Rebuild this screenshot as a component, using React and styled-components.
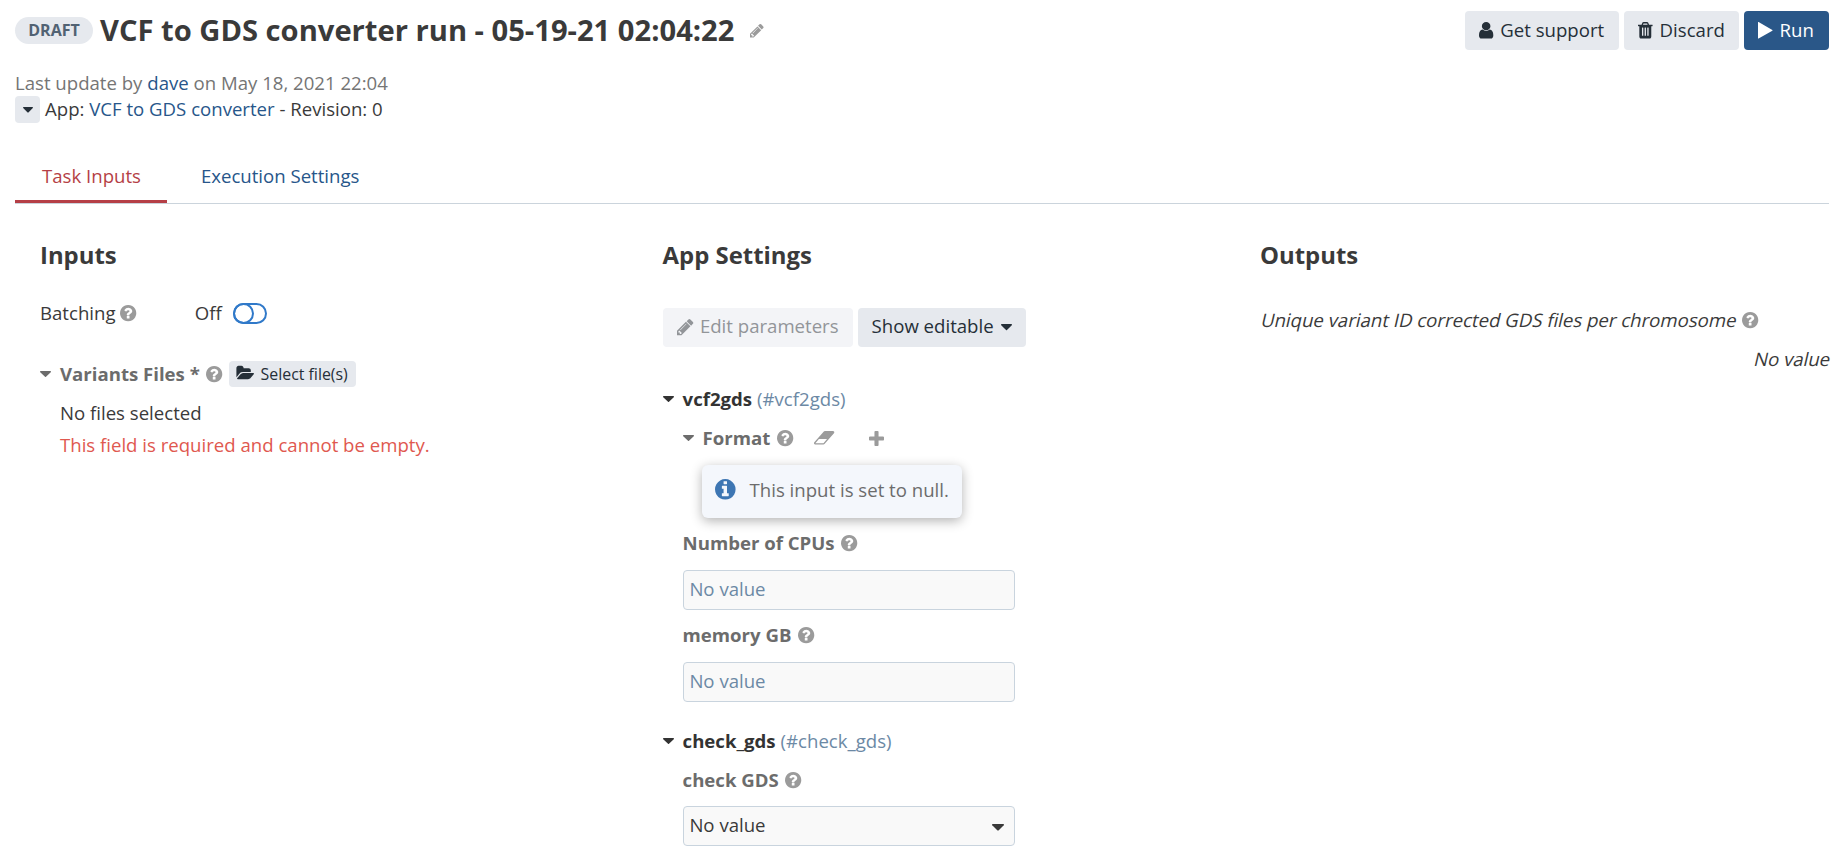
import React from "react";
import styled, { createGlobalStyle } from "styled-components";

const GlobalStyle = createGlobalStyle`
  *, *::before { box-sizing: border-box; }
  body {
    margin: 0;
    background: #fff;
    color: #3a3a3a;
    font-family: "Open Sans", "Noto Sans", sans-serif;
    font-size: 18.6px;
    line-height: 26px;
  }
  a { color: #27568a; text-decoration: none; }
  h1, h2, p { margin: 0; }
`;

const CIRCLE = "m640 416q0 209-103 385.5t-279.5 279.5-385.5 103-385.5-103-279.5-279.5-103-385.5 103-385.5 279.5-279.5 385.5-103 385.5 103 279.5 279.5 103 385.5z";

const ICONS = {
  user: ["256 128 1280 1536", "M1536 1399q0 109-62.5 187t-150.5 78h-854q-88 0-150.5-78t-62.5-187q0-85 8.5-160.5t31.5-152 58.5-131 94-89 134.5-34.5q131 128 313 128t313-128q76 0 134.5 34.5t94 89 58.5 131 31.5 152 8.5 160.5zm-256-887q0 159-112.5 271.5t-271.5 112.5-271.5-112.5-112.5-271.5 112.5-271.5 271.5-112.5 271.5 112.5 112.5 271.5z"],
  trash: ["192 128 1408 1536", "M704 1376v-704q0-14-9-23t-23-9h-64q-14 0-23 9t-9 23v704q0 14 9 23t23 9h64q14 0 23-9t9-23zm256 0v-704q0-14-9-23t-23-9h-64q-14 0-23 9t-9 23v704q0 14 9 23t23 9h64q14 0 23-9t9-23zm256 0v-704q0-14-9-23t-23-9h-64q-14 0-23 9t-9 23v704q0 14 9 23t23 9h64q14 0 23-9t9-23zm-544-992h448l-48-117q-7-9-17-11h-317q-10 2-17 11zm928 32v64q0 14-9 23t-23 9h-96v948q0 83-47 143.5t-113 60.5h-832q-66 0-113-58.5t-47-141.5v-952h-96q-14 0-23-9t-9-23v-64q0-14 9-23t23-9h309l70-167q15-37 54-63t79-26h320q40 0 79 26t54 63l70 167h309q14 0 23 9t9 23z"],
  play: ["192 121 1408 1550", "M1576 927l-1328 738q-23 13-39.5 3t-16.5-36v-1472q0-26 16.5-36t39.5 3l1328 738q23 13 23 31t-23 31z"],
  pencil: ["128 149 1515 1515", "M491 1536l91-91-235-235-91 91v107h128v128h107zm523-928q0-22-22-22-10 0-17 7l-542 542q-7 7-7 17 0 22 22 22 10 0 17-7l542-542q7-7 7-17zm-54-192l416 416-832 832h-416v-416zm683 96q0 53-37 90l-166 166-416-416 166-165q36-38 90-38 53 0 91 38l235 234q37 39 37 91z"],
  question: ["128 128 1536 1536", "M1024 1376v-192q0-14-9-23t-23-9h-192q-14 0-23 9t-9 23v192q0 14 9 23t23 9h192q14 0 23-9t9-23zm256-672q0-88-55.5-163t-138.5-116-170-41q-243 0-371 213-15 24 8 42l132 100q7 6 19 6 16 0 25-12 53-68 86-92 34-24 86-24 48 0 85.5 26t37.5 59q0 38-20 61t-68 45q-63 28-115.5 86.5t-52.5 125.5v36q0 14 9 23t23 9h192q14 0 23-9t9-23q0-19 21.5-49.5t54.5-49.5q32-18 49-28.5t46-35 44.5-48 28-60.5 12.5-81zm384 192q0 209-103 385.5t-279.5 279.5-385.5 103-385.5-103-279.5-279.5-103-385.5 103-385.5 279.5-279.5 385.5-103 385.5 103 279.5 279.5 103 385.5z"],
  info: ["128 128 1536 1536", "M1152 1376v-160q0-14-9-23t-23-9h-96v-512q0-14-9-23t-23-9h-320q-14 0-23 9t-9 23v160q0 14 9 23t23 9h96v320h-96q-14 0-23 9t-9 23v160q0 14 9 23t23 9h448q14 0 23-9t9-23zm-128-896v-160q0-14-9-23t-23-9h-192q-14 0-23 9t-9 23v160q0 14 9 23t23 9h192q14 0 23-9t9-23z" + CIRCLE],
  folder: ["0 256 1815 1280", "M1815 952q0 31-31 66l-336 396q-43 51-120.5 86.5t-143.5 35.5h-1088q-34 0-60.5-13t-26.5-43q0-31 31-66l336-396q43-51 120.5-86.5t143.5-35.5h1088q34 0 60.5 13t26.5 43zm-343-344v160h-832q-94 0-197 47.5t-164 119.5l-337 396-5 6q0-4-.5-12.5t-.5-12.5v-960q0-92 66-158t158-66h320q92 0 158 66t66 158v32h544q92 0 158 66t66 158z"],
  eraser: ["-64 256 1920 1280", "M832 1408l336-384h-768l-336 384h768zm1013-1077q15 34 9.5 71.5t-30.5 65.5l-896 1024q-38 44-96 44h-768q-38 0-69.5-20.5t-47.5-54.5q-15-34-9.5-71.5t30.5-65.5l896-1024q38-44 96-44h768q38 0 69.5 20.5t47.5 54.5z"],
  plus: ["192 128 1408 1408", "M1600 736v192q0 40-28 68t-68 28h-416v416q0 40-28 68t-68 28h-192q-40 0-68-28t-28-68v-416h-416q-40 0-68-28t-28-68v-192q0-40 28-68t68-28h416v-416q0-40 28-68t68-28h192q40 0 68 28t28 68v416h416q40 0 68 28t28 68z"],
  caret: ["384 640 1024 576", "M1408 704q0 26-19 45l-448 448q-19 19-45 19t-45-19l-448-448q-19-19-19-45t19-45 45-19h896q26 0 45 19t19 45z"],
};

const Svg = styled.svg`
  display: block;
  flex: none;
  fill: currentColor;
  overflow: visible;
  width: ${(p) => p.$w}px;
  height: ${(p) => p.$h}px;
`;

function Icon({ name, w, h = w, className }) {
  const [viewBox, d] = ICONS[name];
  return (
    <Svg className={className} viewBox={viewBox} $w={w} $h={h} preserveAspectRatio="none" aria-hidden="true">
      <path d={d} />
    </Svg>
  );
}

const Page = styled.div`
  width: 1848px;
  height: 866px;
  padding: 11px 19px 0 15px;
  overflow: hidden;
`;

const Header = styled.header`
  display: flex;
  align-items: center;
  height: 39px;
`;

const Badge = styled.span`
  width: 78px;
  height: 27px;
  border-radius: 14px;
  background: #e6e9ee;
  color: #516273;
  font-size: 16px;
  font-weight: 700;
  line-height: 27px;
  text-align: center;
`;

const Title = styled.h1`
  margin-left: 7px;
  font-size: 29.15px;
  font-weight: 700;
  line-height: 39px;
  white-space: nowrap;
`;

const TitleEdit = styled(Icon)`
  margin-left: 16px;
  color: #9b9b9b;
`;

const Actions = styled.div`
  display: flex;
  gap: 5px;
  margin-left: auto;
`;

const tones = {
  normal: "background: #e6e9ee; color: #252f38;",
  primary: "background: #2a5788; color: #fff;",
  disabled: "background: #f3f4f7; color: #929599;",
};

const Button = styled.button`
  display: flex;
  align-items: center;
  justify-content: ${(p) => (p.$end ? "space-between" : "flex-start")};
  gap: 7px;
  width: ${(p) => p.$w}px;
  height: 39px;
  padding: 0 14px;
  border: 0;
  border-radius: 4px;
  font: inherit;
  line-height: 26px;
  white-space: nowrap;
  ${(p) => tones[p.$tone || "normal"]}

  span { padding-bottom: 2px; }
`;

const Meta = styled.div`
  display: flex;
  flex-direction: column;
  padding-top: 20px;
`;

const MetaLine = styled.p`
  color: #757575;
`;

const AppLine = styled.div`
  display: flex;
  align-items: center;
  height: 27px;
  gap: 5px;

  > span { padding-bottom: 2px; }
`;

const MiniButton = styled.button`
  display: flex;
  align-items: center;
  justify-content: center;
  width: 25px;
  height: 27px;
  padding: 0;
  border: 0;
  border-radius: 4px;
  background: #e6e9ee;
  color: #252f38;
`;

const Tabs = styled.nav`
  display: flex;
  gap: 7px;
  height: 54px;
  margin-top: 27px;
  border-bottom: 1px solid #cbd4dc;
`;

const Tab = styled.a`
  padding: 13px 26px 0 27px;
  height: 53px;
  ${(p) => p.$active && "color: #b53f46; border-bottom: 3px solid #b53f46;"}
`;

const Columns = styled.main`
  display: grid;
  grid-template-columns: 622.6px 597.4px 1fr;
  padding: 35px 0 0 25px;
`;

const Column = styled.section`
  min-width: 0;
`;

const Heading = styled.h2`
  font-size: 23.9px;
  font-weight: 700;
  line-height: 32px;
`;

const Row = styled.div`
  display: flex;
  align-items: center;
  height: 26px;
  margin-top: ${(p) => p.$top || 0}px;
  padding-left: ${(p) => p.$indent || 0}px;
  white-space: nowrap;
`;

const Label = styled.span`
  color: ${(p) => (p.$dark ? "#333" : "#6c6c6c")};
  font-weight: 700;
`;

const Help = styled(Icon).attrs({ name: "question", w: 16.3 })`
  margin-left: ${(p) => p.$gap || 6.5}px;
  color: #9b9b9b;
`;

const Arrow = styled(Icon).attrs({ name: "caret", w: 11, h: 6 })`
  margin-right: 9px;
  color: ${(p) => (p.$dark ? "#333" : "#6c6c6c")};
`;

const Slug = styled.span`
  margin-left: 5px;
  color: #6c89a5;
`;

const State = styled.span`
  margin: 0 11px 0 58px;
`;

const Switch = styled.span`
  width: 34px;
  height: 21px;
  border: 2px solid #3079c9;
  border-radius: 11px;

  &::before {
    content: "";
    display: block;
    width: 21px;
    height: 21px;
    margin: -2px;
    border: 2px solid #3079c9;
    border-radius: 50%;
  }
`;

const SelectFiles = styled.button`
  display: flex;
  align-items: center;
  gap: 7px;
  width: 127px;
  height: 26px;
  margin: -1px 0 0 6px;
  padding: 0 8px;
  border: 0;
  border-radius: 4px;
  background: #e6e9ee;
  color: #252f38;
  font: inherit;
  font-size: 15.9px;
`;

const ErrorText = styled.span`
  color: #e0584f;
`;

const ButtonRow = styled.div`
  display: flex;
  gap: 5px;
  margin-top: 36.5px;
`;

const Tool = styled(Icon)`
  margin-left: ${(p) => p.$gap}px;
  color: #9b9b9b;
`;

const Notice = styled.div`
  display: flex;
  align-items: center;
  width: 260px;
  height: 53px;
  margin: 13.5px 0 0 39.4px;
  padding: 0 0 3px 13.5px;
  gap: 13.5px;
  border-radius: 6px;
  background: #f4f7fc;
  color: #6c6c6c;
  box-shadow: 0 3px 12px rgba(0, 0, 0, 0.3);
  white-space: nowrap;
`;

const NoticeIcon = styled(Icon)`
  color: #3d76b3;
`;

const Field = styled.div`
  display: flex;
  align-items: center;
  justify-content: space-between;
  width: 332px;
  height: 40px;
  margin: ${(p) => p.$top || 13}px 0 0 20.4px;
  padding: 0 10px 2px 5.4px;
  border: 1px solid #c9d4de;
  border-radius: 4px;
  background: #f9f9f9;
  color: ${(p) => (p.$filled ? "#3a3a3a" : "#6c89a5")};
`;

const FieldCaret = styled(Icon)`
  margin-top: 5px;
`;

const Output = styled(Row)`
  justify-content: ${(p) => (p.$right ? "flex-end" : "flex-start")};
`;

const Slanted = styled.span`
  display: inline-block;
  transform: skewX(-13deg);
  transform-origin: 0 75%;
`;

export default function App() {
  return (
    <Page>
      <GlobalStyle />
      <Header>
        <Badge>DRAFT</Badge>
        <Title>VCF to GDS converter run - 05-19-21 02:04:22</Title>
        <TitleEdit name="pencil" w={13.6} />
        <Actions>
          <Button $w={154}><Icon name="user" w={14.3} h={16.6} /><span>Get support</span></Button>
          <Button $w={115}><Icon name="trash" w={14.6} h={16.6} /><span>Discard</span></Button>
          <Button $w={85} $tone="primary"><Icon name="play" w={14.6} h={16.6} /><span>Run</span></Button>
        </Actions>
      </Header>
      <Meta>
        <MetaLine>Last update by <a>dave</a> on May 18, 2021 22:04</MetaLine>
        <AppLine>
          <MiniButton><Icon name="caret" w={10} h={5.6} /></MiniButton>
          <span>App: <a>VCF to GDS converter</a> - Revision: 0</span>
        </AppLine>
      </Meta>
      <Tabs>
        <Tab $active>Task Inputs</Tab>
        <Tab>Execution Settings</Tab>
      </Tabs>
      <Columns>
        <Column>
          <Heading>Inputs</Heading>
          <Row $top={29}>
            <span>Batching</span>
            <Help $gap={5} />
            <State>Off</State>
            <Switch />
          </Row>
          <Row $top={35}>
            <Arrow />
            <Label>Variants Files *</Label>
            <Help />
            <SelectFiles><Icon name="folder" w={17} h={12.2} />Select file(s)</SelectFiles>
          </Row>
          <Row $top={13} $indent={20}>No files selected</Row>
          <Row $top={6} $indent={20}>
            <ErrorText>This field is required and cannot be empty.</ErrorText>
          </Row>
        </Column>
        <Column>
          <Heading>App Settings</Heading>
          <ButtonRow>
            <Button $w={190} $tone="disabled"><Icon name="pencil" w={16.3} /><span>Edit parameters</span></Button>
            <Button $w={168} $end><span>Show editable</span><Icon name="caret" w={11} h={6.3} /></Button>
          </ButtonRow>
          <Row $top={39.5}>
            <Arrow $dark />
            <Label $dark>vcf2gds</Label>
            <Slug>(#vcf2gds)</Slug>
          </Row>
          <Row $top={13} $indent={20}>
            <Arrow />
            <Label>Format</Label>
            <Help />
            <Tool name="eraser" w={20.3} h={13.5} $gap={20.7} />
            <Tool name="plus" w={15} $gap={35} />
          </Row>
          <Notice><NoticeIcon name="info" w={20.6} />This input is set to null.</Notice>
          <Row $top={12.5} $indent={20}><Label>Number of CPUs</Label><Help /></Row>
          <Field $top={14}>No value</Field>
          <Row $top={12} $indent={20}><Label>memory GB</Label><Help /></Row>
          <Field $top={14}>No value</Field>
          <Row $top={26}>
            <Arrow $dark />
            <Label $dark>check_gds</Label>
            <Slug>(#check_gds)</Slug>
          </Row>
          <Row $top={13} $indent={20}><Label>check GDS</Label><Help /></Row>
          <Field $top={13} $filled>No value<FieldCaret name="caret" w={12} h={6.6} /></Field>
        </Column>
        <Column>
          <Heading>Outputs</Heading>
          <Output $top={36}><Slanted>Unique variant ID corrected GDS files per chromosome</Slanted><Help /></Output>
          <Output $top={13} $right><Slanted>No value</Slanted></Output>
        </Column>
      </Columns>
    </Page>
  );
}
